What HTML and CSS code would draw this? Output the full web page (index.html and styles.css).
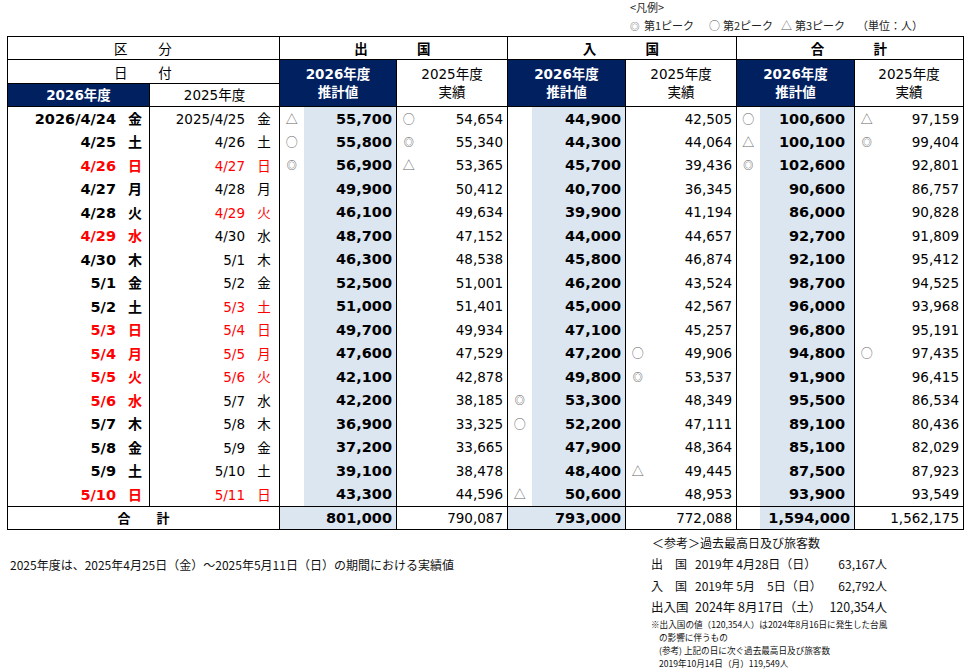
FILE: index.html
```html
<!DOCTYPE html>
<html lang="ja">
<head>
<meta charset="utf-8">
<title>出入国旅客数</title>
<link rel="stylesheet" href="styles.css">
</head>
<body>
<div class="page">
  <div class="legend">
    <div class="lg-title">&lt;凡例&gt;</div>
    <div class="lg-row">
      <span><span class="lg-mk lg-dm">◎</span>第1ピーク</span>
      <span><span class="lg-mk">○</span>第2ピーク</span>
      <span><span class="lg-mk">△</span>第3ピーク</span>
      <span>（単位：人）</span>
    </div>
  </div>

  <table class="tbl">
    <colgroup>
      <col class="w142"><col class="w130">
      <col class="w24"><col class="w93">
      <col class="w24"><col class="w87">
      <col class="w24"><col class="w94">
      <col class="w24"><col class="w87">
      <col class="w23"><col class="w95">
      <col class="w24"><col class="w85">
    </colgroup>
    <thead>
      <tr class="hr1">
        <td colspan="2" class="hc ku">区　　分</td>
        <td colspan="4" class="hc hb">出　　　国</td>
        <td colspan="4" class="hc hb">入　　　国</td>
        <td colspan="4" class="hc hb">合　　　計</td>
      </tr>
      <tr class="hr2">
        <td colspan="2" class="hc ku">日　　付</td>
        <td colspan="2" rowspan="2" class="hc dk">2026年度<br>推計値</td>
        <td colspan="2" rowspan="2" class="hc wh">2025年度<br>実績</td>
        <td colspan="2" rowspan="2" class="hc dk">2026年度<br>推計値</td>
        <td colspan="2" rowspan="2" class="hc wh">2025年度<br>実績</td>
        <td colspan="2" rowspan="2" class="hc dk">2026年度<br>推計値</td>
        <td colspan="2" rowspan="2" class="hc wh">2025年度<br>実績</td>
      </tr>
      <tr class="hr3">
        <td class="hc dk">2026年度</td>
        <td class="hc wh">2025年度</td>
      </tr>
    </thead>
    <tbody>
      <tr><td class="d1">2026/4/24<span class="wd">金</span></td><td class="d2">2025/4/25<span class="wd2">金</span></td><td class="m">△</td><td class="v e">55,700</td><td class="m">○</td><td class="v a">54,654</td><td class="m"></td><td class="v e">44,900</td><td class="m"></td><td class="v a">42,505</td><td class="m">○</td><td class="v e t">100,600</td><td class="m">△</td><td class="v a">97,159</td></tr>
      <tr><td class="d1">4/25<span class="wd">土</span></td><td class="d2">4/26<span class="wd2">土</span></td><td class="m">○</td><td class="v e">55,800</td><td class="m dm">◎</td><td class="v a">55,340</td><td class="m"></td><td class="v e">44,300</td><td class="m"></td><td class="v a">44,064</td><td class="m">△</td><td class="v e t">100,100</td><td class="m dm">◎</td><td class="v a">99,404</td></tr>
      <tr><td class="d1 r">4/26<span class="wd">日</span></td><td class="d2 r">4/27<span class="wd2">日</span></td><td class="m dm">◎</td><td class="v e">56,900</td><td class="m">△</td><td class="v a">53,365</td><td class="m"></td><td class="v e">45,700</td><td class="m"></td><td class="v a">39,436</td><td class="m dm">◎</td><td class="v e t">102,600</td><td class="m"></td><td class="v a">92,801</td></tr>
      <tr><td class="d1">4/27<span class="wd">月</span></td><td class="d2">4/28<span class="wd2">月</span></td><td class="m"></td><td class="v e">49,900</td><td class="m"></td><td class="v a">50,412</td><td class="m"></td><td class="v e">40,700</td><td class="m"></td><td class="v a">36,345</td><td class="m"></td><td class="v e t">90,600</td><td class="m"></td><td class="v a">86,757</td></tr>
      <tr><td class="d1">4/28<span class="wd">火</span></td><td class="d2 r">4/29<span class="wd2">火</span></td><td class="m"></td><td class="v e">46,100</td><td class="m"></td><td class="v a">49,634</td><td class="m"></td><td class="v e">39,900</td><td class="m"></td><td class="v a">41,194</td><td class="m"></td><td class="v e t">86,000</td><td class="m"></td><td class="v a">90,828</td></tr>
      <tr><td class="d1 r">4/29<span class="wd">水</span></td><td class="d2">4/30<span class="wd2">水</span></td><td class="m"></td><td class="v e">48,700</td><td class="m"></td><td class="v a">47,152</td><td class="m"></td><td class="v e">44,000</td><td class="m"></td><td class="v a">44,657</td><td class="m"></td><td class="v e t">92,700</td><td class="m"></td><td class="v a">91,809</td></tr>
      <tr><td class="d1">4/30<span class="wd">木</span></td><td class="d2">5/1<span class="wd2">木</span></td><td class="m"></td><td class="v e">46,300</td><td class="m"></td><td class="v a">48,538</td><td class="m"></td><td class="v e">45,800</td><td class="m"></td><td class="v a">46,874</td><td class="m"></td><td class="v e t">92,100</td><td class="m"></td><td class="v a">95,412</td></tr>
      <tr><td class="d1">5/1<span class="wd">金</span></td><td class="d2">5/2<span class="wd2">金</span></td><td class="m"></td><td class="v e">52,500</td><td class="m"></td><td class="v a">51,001</td><td class="m"></td><td class="v e">46,200</td><td class="m"></td><td class="v a">43,524</td><td class="m"></td><td class="v e t">98,700</td><td class="m"></td><td class="v a">94,525</td></tr>
      <tr><td class="d1">5/2<span class="wd">土</span></td><td class="d2 r">5/3<span class="wd2">土</span></td><td class="m"></td><td class="v e">51,000</td><td class="m"></td><td class="v a">51,401</td><td class="m"></td><td class="v e">45,000</td><td class="m"></td><td class="v a">42,567</td><td class="m"></td><td class="v e t">96,000</td><td class="m"></td><td class="v a">93,968</td></tr>
      <tr><td class="d1 r">5/3<span class="wd">日</span></td><td class="d2 r">5/4<span class="wd2">日</span></td><td class="m"></td><td class="v e">49,700</td><td class="m"></td><td class="v a">49,934</td><td class="m"></td><td class="v e">47,100</td><td class="m"></td><td class="v a">45,257</td><td class="m"></td><td class="v e t">96,800</td><td class="m"></td><td class="v a">95,191</td></tr>
      <tr><td class="d1 r">5/4<span class="wd">月</span></td><td class="d2 r">5/5<span class="wd2">月</span></td><td class="m"></td><td class="v e">47,600</td><td class="m"></td><td class="v a">47,529</td><td class="m"></td><td class="v e">47,200</td><td class="m">○</td><td class="v a">49,906</td><td class="m"></td><td class="v e t">94,800</td><td class="m">○</td><td class="v a">97,435</td></tr>
      <tr><td class="d1 r">5/5<span class="wd">火</span></td><td class="d2 r">5/6<span class="wd2">火</span></td><td class="m"></td><td class="v e">42,100</td><td class="m"></td><td class="v a">42,878</td><td class="m"></td><td class="v e">49,800</td><td class="m dm">◎</td><td class="v a">53,537</td><td class="m"></td><td class="v e t">91,900</td><td class="m"></td><td class="v a">96,415</td></tr>
      <tr><td class="d1 r">5/6<span class="wd">水</span></td><td class="d2">5/7<span class="wd2">水</span></td><td class="m"></td><td class="v e">42,200</td><td class="m"></td><td class="v a">38,185</td><td class="m dm">◎</td><td class="v e">53,300</td><td class="m"></td><td class="v a">48,349</td><td class="m"></td><td class="v e t">95,500</td><td class="m"></td><td class="v a">86,534</td></tr>
      <tr><td class="d1">5/7<span class="wd">木</span></td><td class="d2">5/8<span class="wd2">木</span></td><td class="m"></td><td class="v e">36,900</td><td class="m"></td><td class="v a">33,325</td><td class="m">○</td><td class="v e">52,200</td><td class="m"></td><td class="v a">47,111</td><td class="m"></td><td class="v e t">89,100</td><td class="m"></td><td class="v a">80,436</td></tr>
      <tr><td class="d1">5/8<span class="wd">金</span></td><td class="d2">5/9<span class="wd2">金</span></td><td class="m"></td><td class="v e">37,200</td><td class="m"></td><td class="v a">33,665</td><td class="m"></td><td class="v e">47,900</td><td class="m"></td><td class="v a">48,364</td><td class="m"></td><td class="v e t">85,100</td><td class="m"></td><td class="v a">82,029</td></tr>
      <tr><td class="d1">5/9<span class="wd">土</span></td><td class="d2">5/10<span class="wd2">土</span></td><td class="m"></td><td class="v e">39,100</td><td class="m"></td><td class="v a">38,478</td><td class="m"></td><td class="v e">48,400</td><td class="m">△</td><td class="v a">49,445</td><td class="m"></td><td class="v e t">87,500</td><td class="m"></td><td class="v a">87,923</td></tr>
      <tr><td class="d1 r">5/10<span class="wd">日</span></td><td class="d2 r">5/11<span class="wd2">日</span></td><td class="m"></td><td class="v e">43,300</td><td class="m"></td><td class="v a">44,596</td><td class="m">△</td><td class="v e">50,600</td><td class="m"></td><td class="v a">48,953</td><td class="m"></td><td class="v e t">93,900</td><td class="m"></td><td class="v a">93,549</td></tr>
      <tr class="tot"><td colspan="2" class="tl">合　　計</td><td colspan="2" class="v e">801,000</td><td colspan="2" class="v a">790,087</td><td colspan="2" class="v e">793,000</td><td colspan="2" class="v a">772,088</td><td class="m"></td><td class="v e nb">1,594,000</td><td colspan="2" class="v a">1,562,175</td></tr>
    </tbody>
  </table>

  <div class="foot">
    <p class="note">2025年度は、2025年4月25日（金）～2025年5月11日（日）の期間における実績値</p>
    <div class="ref">
      <div class="ref-title">＜参考＞過去最高日及び旅客数</div>
      <div class="ref-line l1"><span class="lbl">出　国</span><span class="dt">2019年 4月28日（日）</span><span class="cnt">63,167人</span></div>
      <div class="ref-line l2"><span class="lbl">入　国</span><span class="dt">2019年 5月　5日（日）</span><span class="cnt">62,792人</span></div>
      <div class="ref-line l3"><span class="lbl">出入国</span><span class="dt">2024年 8月17日（土）</span><span class="cnt">120,354人</span></div>
      <div class="sm">※出入国の値（120,354人）は2024年8月16日に発生した台風</div>
      <div class="sm ind">の影響に伴うもの</div>
      <div class="sm ind">(参考) 上記の日に次ぐ過去最高日及び旅客数</div>
      <div class="sm ind">2019年10月14日（月）119,549人</div>
    </div>
  </div>
</div>
</body>
</html>
```

FILE: styles.css
```css
* { box-sizing: border-box; }

html, body { height: 669px; overflow: hidden; }

body {
  margin: 0;
  background: #fff;
  color: #000;
  font-family: "DejaVu Sans", "Noto Sans CJK JP", sans-serif;
}

.page {
  width: 970px;
  padding-left: 7px;
}

/* legend */
.legend {
  margin-left: 623px;
  height: 36px;
  padding-top: 1px;
  font-family: "Noto Sans CJK JP", sans-serif;
  font-size: 11px;
  line-height: 13px;
  color: #222;
}
.lg-row {
  display: grid;
  grid-template-columns: 79px 72px 76px auto;
  margin-top: 5px;
}
.lg-mk {
  display: inline-block;
  width: 14px;
  color: #555;
}
.lg-dm { font-size: 9.5px; color: #444; }

/* table */
.tbl {
  border-collapse: collapse;
  table-layout: fixed;
  width: 956px;
  border: 1px solid #000;
}
.w142 { width: 142px; }
.w130 { width: 130px; }
.w24 { width: 24px; }
.w23 { width: 23px; }
.w93 { width: 93px; }
.w87 { width: 87px; }
.w94 { width: 94px; }
.w95 { width: 95px; }
.w85 { width: 85px; }

.tbl td {
  padding: 0;
  border: none;
  white-space: nowrap;
  vertical-align: middle;
}

.hr1 td { height: 23px; }
.hr2 td { height: 24px; }
.hr3 td { height: 23px; }

.tbl .hc {
  border: 1px solid #000;
  text-align: center;
  font-family: "DejaVu Sans", "Noto Sans CJK JP", sans-serif;
  font-size: 13.5px;
  line-height: 18px;
}
.tbl .ku {
  font-family: "Noto Sans CJK JP", sans-serif;
  font-size: 13.5px;
  letter-spacing: 1.2px;
}
.tbl .hb {
  font-family: "Noto Sans CJK JP", sans-serif;
  font-weight: bold;
  font-size: 13.5px;
  letter-spacing: 2.2px;
}
.tbl .dk {
  background: #002060;
  color: #fff;
  font-weight: bold;
}
.tbl .wh {
  background: #fff;
}

tbody tr { height: 23.5px; }
tbody td { line-height: 18px; }

.d1 {
  text-align: right;
  font-weight: bold;
  font-size: 14.5px;
}
.d2 {
  text-align: right;
  font-size: 13.5px;
}
.tbl .d2 { border-left: 1px solid #000; }
.wd, .wd2 {
  display: inline-block;
  text-align: center;
  font-family: "Noto Sans CJK JP", sans-serif;
}
.wd { width: 28px; margin-left: 5px; font-size: 14px; }
.wd2 { width: 30px; margin-left: 4px; font-size: 13.5px; font-weight: normal; }
.r { color: #ff0000; }

.tbl .m {
  border-left: 1px solid #000;
  text-align: center;
  font-family: "Noto Sans CJK JP", sans-serif;
  font-size: 12px;
  color: #666;
}
.tbl .m.dm { font-size: 10px; color: #444; }

.v {
  text-align: right;
}
.tbl .v { padding-right: 4px; }
.tbl .v.t { padding-right: 9px; }
.e {
  background: #dce6f1;
  font-weight: bold;
  font-size: 14.5px;
}
.a {
  font-size: 13.5px;
}

.tot td { height: 23px; border-top: 1px solid #000; }
.tbl .tot td { border-left: 1px solid #000; }
.tbl .tot td.nb { border-left: none; }
.tl {
  text-align: center;
  font-family: "Noto Sans CJK JP", sans-serif;
  font-weight: bold;
  font-size: 13px;
}

/* footer */
.foot {
  display: grid;
  grid-template-columns: 644px 319px;
  font-family: "Noto Sans CJK JP", sans-serif;
  color: #111;
}
.note {
  margin: 27px 0 0 3px;
  font-size: 12px;
  line-height: 16px;
}
.ref {
  padding-top: 3px;
  font-size: 12px;
  white-space: nowrap;
}
.ref-title {
  height: 20px;
  line-height: 20px;
  padding-left: 1px;
}
.ref-line {
  display: flex;
  width: 238px;
  height: 21px;
  line-height: 21px;
}
.ref-line.l1 { height: 22px; line-height: 22px; }
.ref-line.l3 { height: 22px; line-height: 22px; font-size: 12.5px; }
.lbl { width: 44px; }
.dt { flex: 1; }
.cnt { text-align: right; padding-right: 2px; }
.sm {
  font-size: 8.6px;
  line-height: 13px;
  height: 13px;
}
.sm.ind { padding-left: 8px; }
```
